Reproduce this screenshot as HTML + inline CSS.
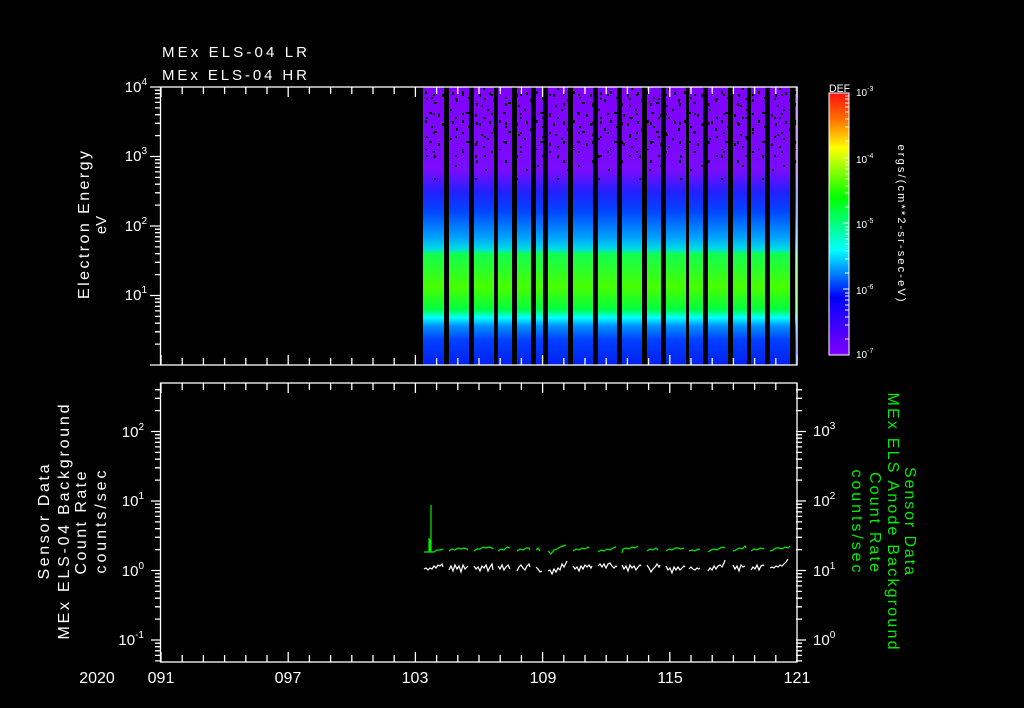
<!DOCTYPE html>
<html><head><meta charset="utf-8"><style>
html,body{margin:0;padding:0;background:#000;}
svg{display:block;}
text{font-family:"Liberation Sans",sans-serif;}
</style></head><body>
<svg width="1024" height="708" viewBox="0 0 1024 708" xmlns="http://www.w3.org/2000/svg">
<defs>
<linearGradient id="spec" x1="0" y1="87" x2="0" y2="365" gradientUnits="userSpaceOnUse">
<stop offset="0" stop-color="#8000ff"/>
<stop offset="0.30" stop-color="#7a0cff"/>
<stop offset="0.38" stop-color="#2020ff"/>
<stop offset="0.45" stop-color="#0048ff"/>
<stop offset="0.54" stop-color="#00a0ff"/>
<stop offset="0.585" stop-color="#00e0e0"/>
<stop offset="0.60" stop-color="#10ff50"/>
<stop offset="0.72" stop-color="#48ff00"/>
<stop offset="0.80" stop-color="#00ff40"/>
<stop offset="0.83" stop-color="#00ffff"/>
<stop offset="0.86" stop-color="#0090ff"/>
<stop offset="0.91" stop-color="#0040ff"/>
<stop offset="1" stop-color="#0020f0"/>
</linearGradient>
<linearGradient id="cbar" x1="0" y1="93" x2="0" y2="355" gradientUnits="userSpaceOnUse">
<stop offset="0" stop-color="#ff1010"/>
<stop offset="0.10" stop-color="#ff7000"/>
<stop offset="0.21" stop-color="#ffff00"/>
<stop offset="0.40" stop-color="#00ff00"/>
<stop offset="0.60" stop-color="#00ffff"/>
<stop offset="0.78" stop-color="#0000ff"/>
<stop offset="1" stop-color="#8000ff"/>
</linearGradient>
<pattern id="spk" x="423" y="88" width="37" height="29" patternUnits="userSpaceOnUse">
<rect x="2" y="3" width="2" height="3" fill="#000"/>
<rect x="11" y="14" width="3" height="2" fill="#000"/>
<rect x="19" y="6" width="2" height="3" fill="#000"/>
<rect x="27" y="21" width="2" height="2" fill="#000"/>
<rect x="33" y="11" width="2" height="3" fill="#000"/>
<rect x="6" y="24" width="3" height="2" fill="#000"/>
<rect x="23" y="0" width="2" height="2" fill="#000"/>
<rect x="15" y="26" width="2" height="3" fill="#000"/>
<rect x="8" y="9" width="2" height="2" fill="#000"/>
<rect x="29" y="4" width="2" height="3" fill="#000"/>
<rect x="21" y="17" width="2" height="2" fill="#000"/>
</pattern>
<pattern id="spk3" x="430" y="92" width="29" height="19" patternUnits="userSpaceOnUse">
<rect x="3" y="2" width="2" height="2" fill="#000"/>
<rect x="17" y="11" width="2" height="3" fill="#000"/>
<rect x="25" y="6" width="2" height="2" fill="#000"/>
</pattern>
<pattern id="spk2" x="430" y="150" width="41" height="23" patternUnits="userSpaceOnUse">
<rect x="4" y="5" width="2" height="3" fill="#000"/>
<rect x="25" y="15" width="2" height="2" fill="#000"/>
<rect x="14" y="19" width="2" height="2" fill="#000"/>
</pattern>
<g id="xt" stroke="#fff" stroke-width="1.3" fill="none">
<path d="M161 0v-10M182.2 0v-7M203.4 0v-7M224.6 0v-7M245.8 0v-7M267 0v-7M288.2 0v-10M309.4 0v-7M330.6 0v-7M351.8 0v-7M373 0v-7M394.2 0v-7M415.4 0v-10M436.6 0v-7M457.8 0v-7M479 0v-7M500.2 0v-7M521.4 0v-7M542.6 0v-10M563.8 0v-7M585 0v-7M606.2 0v-7M627.4 0v-7M648.6 0v-7M669.8 0v-10M691 0v-7M712.2 0v-7M733.4 0v-7M754.6 0v-7M775.8 0v-7M797 0v-10"/>
</g>
<g id="ybt" stroke="#fff" stroke-width="1.3" fill="none">
<path d="M151 431.5h10M151 501h10M151 570.5h10M151 640h10"/>
<path d="M155 410.6h6M155 398.3h6M155 389.7h6M155 480.1h6M155 467.8h6M155 459.2h6M155 452.4h6M155 446.9h6M155 442.3h6M155 438.2h6M155 434.7h6M155 549.6h6M155 537.3h6M155 528.7h6M155 521.9h6M155 516.4h6M155 511.8h6M155 507.7h6M155 504.2h6M155 619.1h6M155 606.8h6M155 598.2h6M155 591.4h6M155 585.9h6M155 581.3h6M155 577.2h6M155 573.7h6M155 660.9h6M155 655.4h6M155 650.8h6M155 646.7h6M155 643.2h6"/>
</g>
</defs>

<text x="162" y="57" fill="#fff" font-size="15" textLength="145" lengthAdjust="spacing">MEx ELS-04 LR</text>
<text x="162" y="80" fill="#fff" font-size="15" textLength="145" lengthAdjust="spacing">MEx ELS-04 HR</text>

<rect x="423" y="87" width="374" height="278" fill="url(#spec)"/>
<rect x="423" y="88" width="374" height="62" fill="url(#spk)"/>
<rect x="423" y="92" width="374" height="76" fill="url(#spk3)"/>
<rect x="423" y="150" width="374" height="30" fill="url(#spk2)"/>
<g fill="#000">
<rect x="444" y="87" width="5" height="278"/>
<rect x="469" y="87" width="5" height="278"/>
<rect x="494" y="87" width="4" height="278"/>
<rect x="512" y="87" width="5" height="278"/>
<rect x="531" y="87" width="5" height="278"/>
<rect x="543" y="87" width="5" height="278"/>
<rect x="568" y="87" width="5" height="278"/>
<rect x="593" y="87" width="5" height="278"/>
<rect x="617" y="87" width="5" height="278"/>
<rect x="642" y="87" width="5" height="278"/>
<rect x="661" y="87" width="5" height="278"/>
<rect x="686" y="87" width="3" height="278"/>
<rect x="703" y="87" width="5" height="278"/>
<rect x="728" y="87" width="5" height="278"/>
<rect x="747" y="87" width="4" height="278"/>
<rect x="765" y="87" width="5" height="278"/>
<rect x="790" y="87" width="5" height="278"/>
</g>
<rect x="160.5" y="87" width="636.5" height="278" fill="none" stroke="#fff" stroke-width="1.3"/>
<use href="#xt" transform="translate(0,365)"/>
<use href="#xt" transform="translate(0,87) scale(1,-1)"/>
<g stroke="#fff" stroke-width="1.3" fill="none">
<path d="M150 87h10M150 156.5h10M150 226h10M150 295.5h10M150 365h10"/>
<path d="M155 344.1h5M155 331.8h5M155 323.2h5M155 316.4h5M155 310.9h5M155 306.3h5M155 302.2h5M155 298.7h5M155 274.6h5M155 262.3h5M155 253.7h5M155 246.9h5M155 241.4h5M155 236.8h5M155 232.7h5M155 229.2h5M155 205.1h5M155 192.8h5M155 184.2h5M155 177.4h5M155 171.9h5M155 167.3h5M155 163.2h5M155 159.7h5M155 135.6h5M155 123.3h5M155 114.7h5M155 107.9h5M155 102.4h5M155 97.8h5M155 93.7h5M155 90.2h5"/>
</g>
<g fill="#fff" font-size="15" text-anchor="end">
<text x="147" y="92">10<tspan dy="-7" font-size="10">4</tspan></text>
<text x="147" y="161">10<tspan dy="-7" font-size="10">3</tspan></text>
<text x="147" y="231">10<tspan dy="-7" font-size="10">2</tspan></text>
<text x="147" y="300">10<tspan dy="-7" font-size="10">1</tspan></text>
</g>
<text transform="translate(89,225) rotate(-90)" fill="#fff" font-size="16" text-anchor="middle" textLength="148" lengthAdjust="spacing">Electron Energy</text>
<text transform="translate(106,225) rotate(-90)" fill="#fff" font-size="15" text-anchor="middle">eV</text>

<text x="829" y="92" fill="#fff" font-size="11" textLength="21" lengthAdjust="spacingAndGlyphs">DEF</text>
<rect x="829" y="93" width="20" height="262" fill="url(#cbar)" stroke="#fff" stroke-width="1"/>
<g stroke="#fff" stroke-width="1" fill="none">
<path d="M843 158h6M843 223h6M843 289h6M845 96h4M845 99h4M845 103h4M845 107h4M845 112h4M845 119h4M845 127h4M845 141h4M845 162h4M845 165h4M845 169h4M845 174h4M845 179h4M845 186h4M845 193h4M845 207h4M845 227h4M845 230h4M845 234h4M845 239h4M845 244h4M845 251h4M845 259h4M845 273h4M845 293h4M845 296h4M845 300h4M845 305h4M845 310h4M845 317h4M845 325h4M845 339h4"/>
</g>
<g fill="#fff" font-size="10">
<text x="856" y="96">10<tspan dy="-5" font-size="7">-3</tspan></text>
<text x="856" y="163">10<tspan dy="-5" font-size="7">-4</tspan></text>
<text x="856" y="228">10<tspan dy="-5" font-size="7">-5</tspan></text>
<text x="856" y="294">10<tspan dy="-5" font-size="7">-6</tspan></text>
<text x="856" y="358">10<tspan dy="-5" font-size="7">-7</tspan></text>
</g>
<text transform="translate(898,223) rotate(90)" fill="#fff" font-size="11" text-anchor="middle" textLength="157" lengthAdjust="spacing">ergs/(cm**2-sr-sec-eV)</text>

<rect x="160.5" y="383" width="636.5" height="279" fill="none" stroke="#fff" stroke-width="1.3"/>
<use href="#xt" transform="translate(0,662)"/>
<use href="#xt" transform="translate(0,383) scale(1,-1)"/>
<use href="#ybt"/>
<use href="#ybt" transform="translate(957,0) scale(-1,1)"/>
<g fill="#fff" font-size="15" text-anchor="end">
<text x="144" y="437">10<tspan dy="-7" font-size="10">2</tspan></text>
<text x="144" y="506">10<tspan dy="-7" font-size="10">1</tspan></text>
<text x="144" y="576">10<tspan dy="-7" font-size="10">0</tspan></text>
<text x="144" y="645">10<tspan dy="-7" font-size="10">-1</tspan></text>
</g>
<g fill="#fff" font-size="15">
<text x="813" y="436">10<tspan dy="-7" font-size="10">3</tspan></text>
<text x="813" y="506">10<tspan dy="-7" font-size="10">2</tspan></text>
<text x="813" y="576">10<tspan dy="-7" font-size="10">1</tspan></text>
<text x="813" y="645">10<tspan dy="-7" font-size="10">0</tspan></text>
</g>
<g fill="#fff" font-size="16" text-anchor="middle" lengthAdjust="spacing">
<text transform="translate(49,522) rotate(-90)" textLength="115">Sensor Data</text>
<text transform="translate(69,522) rotate(-90)" textLength="235">MEx ELS-04 Background</text>
<text transform="translate(86,523) rotate(-90)" textLength="103">Count Rate</text>
<text transform="translate(106,522) rotate(-90)" textLength="103">counts/sec</text>
</g>
<g fill="#00ee00" font-size="16" text-anchor="middle" lengthAdjust="spacing">
<text transform="translate(905,521) rotate(90)" textLength="108">Sensor Data</text>
<text transform="translate(888,521) rotate(90)" textLength="257">MEx ELS Anode Background</text>
<text transform="translate(870,522) rotate(90)" textLength="100">Count Rate</text>
<text transform="translate(852,521) rotate(90)" textLength="103">counts/sec</text>
</g>

<path fill="none" stroke="#fff" stroke-width="1.2" d="
M424 569 l2 -1 l2 2 l2 -2 l2 1 l2 -3 l2 2 l2 -3 l2 1 l2 -2 l1 3
M449 570 l2 -4 l2 5 l2 -6 l2 4 l2 -3 l2 6 l2 -7 l2 4 l2 -2 l1 -1
M474 566 l2 3 l2 -2 l2 4 l2 -5 l2 2 l2 -3 l2 6 l2 -4 l2 -3 l1 6
M498 566 l2 3 l2 -4 l2 5 l2 -3 l2 -2 l2 4
M517 571 l2 -4 l2 -2 l2 3 l2 2 l2 -4 l2 -2 l1 3
M536 567 l2 2 l2 3 l2 -1
M548 571 l2 -1 l2 4 l2 -5 l2 3 l2 -4 l2 2 l2 -6 l2 3 l2 -4 l1 -2
M573 566 l2 3 l2 -2 l2 4 l2 -5 l2 3 l2 -4 l2 2 l2 -2 l2 3 l1 -2
M598 566 l2 -2 l2 3 l2 -3 l2 4 l2 -4 l2 -1 l2 3 l2 2 l2 -2 l1 1
M622 565 l2 4 l2 -3 l2 5 l2 -6 l2 3 l2 -2 l2 4 l2 -3 l2 -2 l1 1
M647 565 l2 3 l2 4 l2 -3 l2 -2 l2 -3 l2 3 l1 -2
M666 566 l2 4 l2 -2 l2 5 l2 -6 l2 3 l2 -3 l2 3 l2 -2 l2 -2 l1 1
M689 569 l2 -2 l2 2 l2 1 l2 -2 l2 1 l1 -1
M708 571 l2 -3 l2 2 l2 -4 l2 3 l2 -3 l2 -1 l2 2 l2 -4 l1 -3
M733 565 l2 4 l2 -3 l2 5 l2 -6 l2 2 l2 -1
M751 570 l2 -3 l2 2 l2 -4 l2 5 l2 -4 l2 -1 l1 1
M770 568 l2 -1 l2 1 l2 -2 l2 1 l2 -2 l2 1 l2 -2 l2 -2 l2 -3
"/>
<path fill="none" stroke="#00ee00" stroke-width="1.2" d="
M424 552 h5 v-14 v14 h1 v-12 h1 v12 v-47 v47 h3 l3 -2 h3 l3 -1
M449 551 l3 -2 l3 1 l3 -2 l3 1 l3 -1 l3 1 l1 1
M474 551 l3 -2 h3 l3 -2 l3 1 l3 -1 l3 1 l1 1
M498 551 l3 -2 l3 1 l3 -3 l3 1
M517 551 l3 -2 l3 1 l3 -2 h3 l1 2
M536 550 l2 -2 l2 3
M548 551 l3 3 l3 -4 l3 -1 l3 -2 l3 -1 l3 -1
M573 551 l3 -2 l3 1 l3 -2 l3 1 l3 -2 l1 1
M598 552 l3 -2 l3 1 l3 -2 l3 1 l3 -2 l3 -1
M622 553 l1 -4 l3 -1 l3 1 l3 -2 l3 1 l3 -2
M647 551 l3 -2 l3 1 l3 -2 l2 2
M666 551 l3 -2 l3 1 l3 -2 h3 l3 1 l3 -1
M689 551 l3 -1 l3 1 l3 -2 l2 1
M708 552 l3 -2 l3 -1 l3 1 l3 -2 l3 -1 l2 1
M733 551 l3 -1 l3 -2 l3 1 l3 -3 l1 2
M751 551 l3 -2 l3 1 l3 -2 l3 1 l1 -1
M770 551 l3 -1 l3 -2 h3 l3 1 l3 -2 l3 1 l2 -2
"/>

<g fill="#fff" font-size="16" text-anchor="middle">
<text x="97" y="683">2020</text>
<text x="161" y="683">091</text>
<text x="288" y="683">097</text>
<text x="415" y="683">103</text>
<text x="543" y="683">109</text>
<text x="670" y="683">115</text>
<text x="797" y="683">121</text>
</g>
</svg>
</body></html>
